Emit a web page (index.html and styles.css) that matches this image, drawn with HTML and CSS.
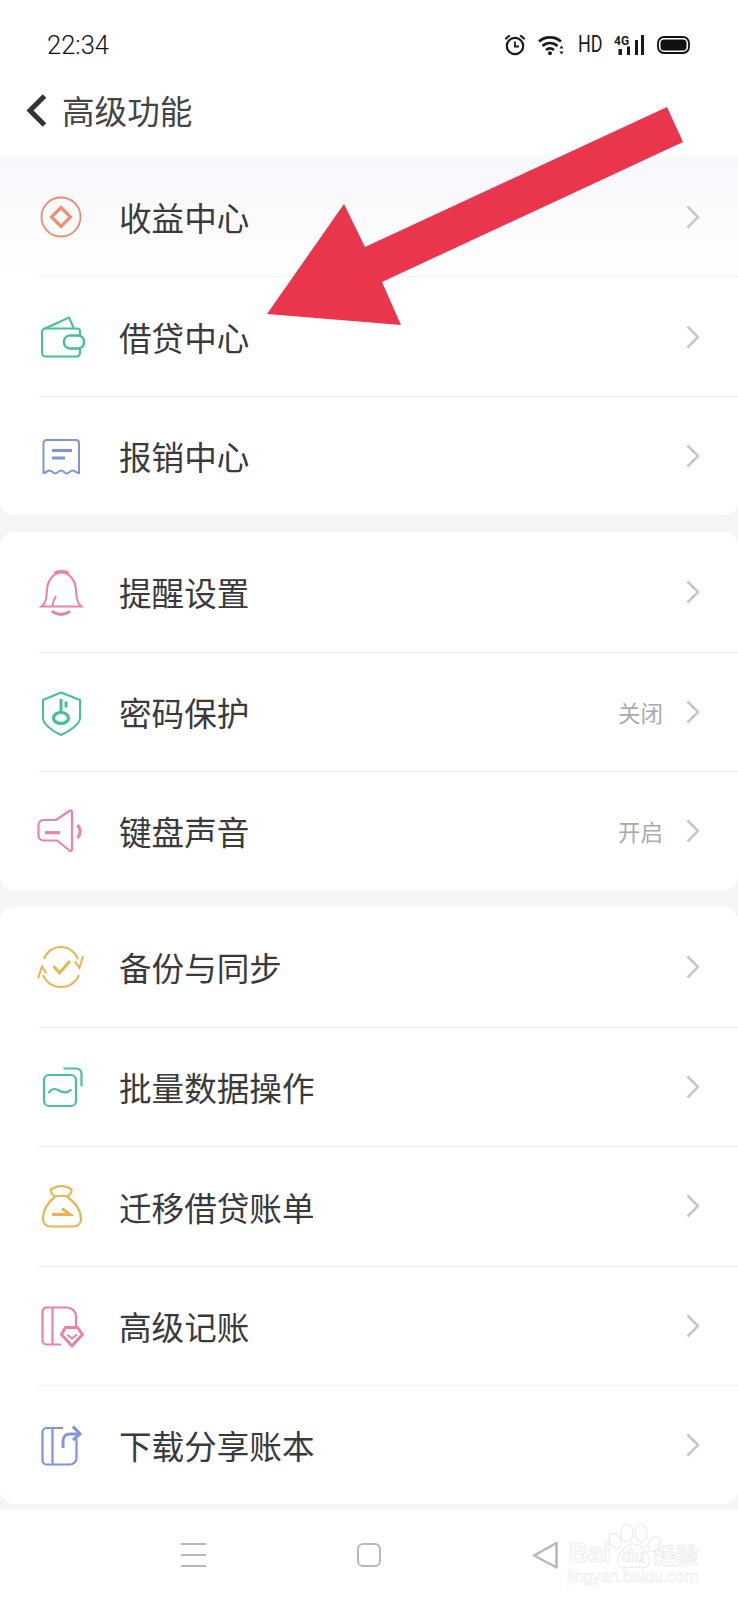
FILE: index.html
```html
<!DOCTYPE html>
<html lang="zh-CN">
<head>
  <meta charset="UTF-8">
  <meta name="viewport" content="width=device-width, initial-scale=1.0">
  <title>高级功能</title>
  <link rel="stylesheet" href="styles.css">
</head>
<body>

<div class="page">
  <div class="status-bar">
    <span class="time">22:34</span>
    <div class="status-icons">
      <svg class="st-alarm" width="22" height="22" viewBox="0 0 22 22" fill="none" stroke="#1a1a1a" stroke-width="2.2">
        <circle cx="11" cy="12" r="8.2"/>
        <path d="M11 7.5V12.5H15" stroke-width="1.8"/>
        <path d="M2 4.5L5 2M20 4.5L17 2" stroke-linecap="round"/>
      </svg>
      <svg class="st-wifi" width="28" height="22" viewBox="0 0 28 22" fill="none" stroke="#1a1a1a" stroke-width="2.6">
        <path d="M1 7.5C7 2 17 2 23 7.5"/>
        <path d="M4.5 12C9 8 15 8 19.5 12"/>
        <path d="M8 16C10.5 14 13.5 14 16 16"/>
        <circle cx="12" cy="19.2" r="2" fill="#1a1a1a" stroke="none"/>
        <path d="M23.5 11.5L21.5 14.5H25.5ZM23.5 20.5L21.5 17.5H25.5Z" fill="#1a1a1a" stroke="none"/>
      </svg>
      <span class="st-hd">HD</span>
      <svg class="st-signal" width="31" height="22" viewBox="0 0 31 22" fill="#1a1a1a">
        <text x="0" y="10.5" class="st-net">4G</text>
        <rect x="4.500" y="15" width="3.500" height="6"/>
        <rect x="13" y="12.500" width="3" height="8.500"/>
        <rect x="21" y="6" width="3" height="15"/>
        <rect x="27" y="1" width="3" height="20"/>
      </svg>
      <svg class="st-battery" width="33" height="20" viewBox="0 0 33 20" fill="#111">
        <rect x="1" y="2" width="31" height="16" rx="6" fill="none" stroke="#111" stroke-width="1.800"/>
        <rect x="3.500" y="4.500" width="26" height="11" rx="3.500"/>
      </svg>
    </div>
  </div>

  <div class="title-bar">
    <svg class="back" width="21" height="33" viewBox="0 0 21 33" fill="none" stroke="#333" stroke-width="5">
      <path d="M18.500 2L4 16.500L18.500 31"/>
    </svg>
    <span class="title">高级功能</span>
  </div>

  <div class="panel panel-top">
    <div class="row">
      <svg class="icon" viewBox="0 0 48 48" fill="none" stroke="#e88c72">
        <circle cx="24" cy="24" r="19.500" stroke-width="1.800"/>
        <path d="M24 14.500L33.500 24L24 33.500L14.500 24Z" stroke-width="3.200" stroke="#ee9170"/>
      </svg>
      <span class="label">收益中心</span>
      <svg class="chevron" viewBox="0 0 14 24"><path d="M1.500 1.500L12 12L1.500 22.500"/></svg>
    </div>
    <div class="row">
      <svg class="icon" viewBox="0 0 48 48" fill="none" stroke="#42c193" stroke-width="2">
        <path d="M43 35.500V40A3.500 3.500 0 0 1 39.500 43.500H8.500A3.500 3.500 0 0 1 5 40V19A3.500 3.500 0 0 1 8.500 15.500H40A3 3 0 0 1 43 18.500V22.500"/>
        <path d="M7 16L32 4.500L37 15.500"/>
        <rect x="27" y="22.500" width="20" height="13" rx="6" stroke-width="2.400"/>
      </svg>
      <span class="label">借贷中心</span>
      <svg class="chevron" viewBox="0 0 14 24"><path d="M1.500 1.500L12 12L1.500 22.500"/></svg>
    </div>
    <div class="row">
      <svg class="icon" viewBox="0 0 48 48" fill="none" stroke="#7f94d9" stroke-width="2">
        <path d="M6.500 41V11A3 3 0 0 1 9.500 8H39A3 3 0 0 1 42 11V41C39 41 38 38.500 35.500 38.500C33 38.500 32 41.500 30 41.500C27.500 41.500 26.500 38.500 24 38.500C21.500 38.500 20.500 41.500 18.500 41.500C16 41.500 15 38.500 12.500 38.500C10 38.500 9.500 41 6.500 41Z"/>
        <path d="M15 18.500H35M15 26H28" stroke-width="3"/>
      </svg>
      <span class="label">报销中心</span>
      <svg class="chevron" viewBox="0 0 14 24"><path d="M1.500 1.500L12 12L1.500 22.500"/></svg>
    </div>
  </div>

  <div class="panel">
    <div class="row">
      <svg class="icon" viewBox="0 0 48 48" fill="none" stroke="#ec80a6" stroke-width="2">
        <path d="M4.500 38.500H44.500C40 35 39.500 30 39 22C38.500 12 32 4.500 24.500 4.500C17 4.500 10.500 12 10 22C9.500 30 9 35 4.500 38.500Z"/>
        <path d="M19 28C17 31 16 34 15.500 38"/>
        <path d="M17.500 5.500C20.500 2.800 28.500 2.800 31.500 5.500" stroke-width="3.200"/>
        <path d="M15 43C20 47.500 28 47.500 33 43" stroke-width="3"/>
      </svg>
      <span class="label">提醒设置</span>
      <svg class="chevron" viewBox="0 0 14 24"><path d="M1.500 1.500L12 12L1.500 22.500"/></svg>
    </div>
    <div class="row">
      <svg class="icon" viewBox="0 0 48 48" fill="none" stroke="#42c193" stroke-width="2">
        <path d="M24 4.500L43 12V30C43 36 33 43 24 47C15 43 6 36 6 30V12Z" stroke-linejoin="round"/>
        <ellipse cx="24" cy="30" rx="7.500" ry="5.500" stroke-width="3.200"/>
        <path d="M24 11V24M29 13.500V19.500" stroke-width="3"/>
      </svg>
      <span class="label">密码保护</span>
      <span class="value">关闭</span>
      <svg class="chevron" viewBox="0 0 14 24"><path d="M1.500 1.500L12 12L1.500 22.500"/></svg>
    </div>
    <div class="row">
      <svg class="icon" viewBox="0 0 48 48" fill="none" stroke="#ea82aa" stroke-width="2.200">
        <path d="M33 3.500C34.500 3 35 4 35 5V42.500C35 43.500 34 44.500 32.500 43.500L20 33.500H6A5 5 0 0 1 1.500 28.500V18A5 5 0 0 1 6 13H19Z" stroke-linejoin="round"/>
        <path d="M8 25.700H23" stroke-width="3.200"/>
        <path d="M40.500 18C44 22 44 27 40.500 31" stroke-width="3.200"/>
      </svg>
      <span class="label">键盘声音</span>
      <span class="value">开启</span>
      <svg class="chevron" viewBox="0 0 14 24"><path d="M1.500 1.500L12 12L1.500 22.500"/></svg>
    </div>
  </div>

  <div class="panel">
    <div class="row">
      <svg class="icon" viewBox="0 0 48 48" fill="none" stroke="#e9b54e" stroke-width="2">
        <path d="M7 16C9.500 9 16 4 24 4C32 4 38.500 9 41 16.500"/>
        <path d="M42 32C39.500 39 32.500 44 24 44C15.500 44 8.500 39 6 32"/>
        <path d="M46 13L42.500 25L38 18.500M1 35.500L5 23.500L9.500 30.500"/>
        <path d="M16.500 23L22.500 30L33 18" stroke-width="3"/>
      </svg>
      <span class="label">备份与同步</span>
      <svg class="chevron" viewBox="0 0 14 24"><path d="M1.500 1.500L12 12L1.500 22.500"/></svg>
    </div>
    <div class="row">
      <svg class="icon" viewBox="0 0 48 48" fill="none" stroke="#48c19d" stroke-width="2.200">
        <rect x="7" y="12" width="32" height="31" rx="5"/>
        <path d="M26.500 5.500H39.500A5 5 0 0 1 44.500 10.500V23"/>
        <path d="M11.500 30C15 25 18 25 22 27.500C26 30 30 30.500 34.500 26.500"/>
      </svg>
      <span class="label">批量数据操作</span>
      <svg class="chevron" viewBox="0 0 14 24"><path d="M1.500 1.500L12 12L1.500 22.500"/></svg>
    </div>
    <div class="row">
      <svg class="icon" viewBox="0 0 48 48" fill="none" stroke="#e9b54e" stroke-width="2.200">
        <path d="M18 14.500C15 12.500 13.500 10 14 7.500C20 3 29 3 34.500 7.500C35 10 33.500 12.500 30.500 14.500C26 13.500 22 13.500 18 14.500Z" stroke-linejoin="round"/>
        <path d="M18 15C11 20 6 28 6 37C6 41.500 9 44.500 14 44.500H36C41 44.500 44 41.500 44 37C44 28 37.500 20 30.500 15"/>
        <path d="M15 32.500H33L25 26.500" stroke-width="3"/>
      </svg>
      <span class="label">迁移借贷账单</span>
      <svg class="chevron" viewBox="0 0 14 24"><path d="M1.500 1.500L12 12L1.500 22.500"/></svg>
    </div>
    <div class="row">
      <svg class="icon" viewBox="0 0 48 48" fill="none" stroke="#ea80ad" stroke-width="2.200">
        <path d="M24 42.500H9.500A4 4 0 0 1 5.500 38.500V9.500A4 4 0 0 1 9.500 5.500H30A9 9 0 0 1 39 14.500V25"/>
        <path d="M15.500 5.500V42.500"/>
        <path d="M28.500 25.500H40.500L45.500 32.500L35 44L24.500 32.500Z" fill="#fff" stroke-width="3" stroke-linejoin="round"/>
        <path d="M30 32.500L35 36.500L40 32.500" stroke-width="1.800"/>
      </svg>
      <span class="label">高级记账</span>
      <svg class="chevron" viewBox="0 0 14 24"><path d="M1.500 1.500L12 12L1.500 22.500"/></svg>
    </div>
    <div class="row">
      <svg class="icon" viewBox="0 0 48 48" fill="none" stroke="#7f94dc" stroke-width="2.200">
        <path d="M26 7H9.500A4 4 0 0 0 5.500 11V39.500A4 4 0 0 0 9.500 43.500H33A6.500 6.500 0 0 0 39.500 37V18"/>
        <path d="M15.500 7V43.500"/>
        <path d="M26 27V20C26 15.500 29 13 33 13H42" stroke-width="3"/>
        <path d="M36 5.500L43 13L36 19" stroke-width="3"/>
      </svg>
      <span class="label">下载分享账本</span>
      <svg class="chevron" viewBox="0 0 14 24"><path d="M1.500 1.500L12 12L1.500 22.500"/></svg>
    </div>
  </div>

  <div class="nav-bar">
    <div class="nav-item">
      <div class="nav-menu"><span></span><span></span><span></span></div>
    </div>
    <div class="nav-item"><div class="nav-home"></div></div>
    <div class="nav-item">
      <svg width="26" height="28" viewBox="0 0 26 28" fill="none" stroke="#b8b8b8" stroke-width="2.500" stroke-linejoin="round">
        <path d="M24.500 2L2 14.500L24.500 26.500Z"/>
      </svg>
    </div>

    <!-- watermark -->
    <div class="watermark">
      <svg class="wm-paw" width="76" height="52" viewBox="0 0 76 52" fill="#fff" stroke="#ebebeb" stroke-width="1.200">
        <ellipse cx="30" cy="13" rx="6" ry="9"/>
        <ellipse cx="44" cy="13" rx="6" ry="9"/>
        <ellipse cx="18" cy="21" rx="5.500" ry="8" transform="rotate(-30 18 21)"/>
        <ellipse cx="57" cy="24" rx="5.500" ry="8" transform="rotate(30 57 24)"/>
        <path d="M36 24C45 24 54 36 52 44C50 50 42 47 37 47C31 47 24 50 21 44C19 36 28 24 36 24Z"/>
      </svg>
      <div class="wm-top">
        <span class="wm-bai">Bai</span>
        <span class="wm-du">du</span>
        <span class="wm-cn">经验</span>
      </div>
      <div class="wm-url">jingyan.baidu.com</div>
    </div>
  </div>

  <!-- red arrow drawn over the screenshot -->
  <svg class="arrow" width="738" height="340" viewBox="0 0 738 340">
    <polygon points="667,107 683,142 382,282 401,325 267,314 344,204 365,247" fill="#e9364c"/>
  </svg>
</div>

</body>
</html>
```

FILE: styles.css
```css
body {
  margin: 0;
  background-color: #fff;
  font-family: "Noto Sans CJK SC", "Noto Sans", sans-serif;
}

.page {
  position: relative;
  width: 738px;
  height: 1600px;
  overflow: hidden;
  background-color: #f5f5f8;
}

/* status bar */
.status-bar {
  height: 90px;
  padding: 0 48px 0 47px;
  background-color: #fff;
  display: flex;
  justify-content: space-between;
  align-items: center;
}

.time {
  font-family: Roboto, sans-serif;
  font-size: 25.5px;
  font-weight: 300;
  color: #111;
}

.status-icons {
  display: flex;
  align-items: center;
  gap: 12px;
}

.st-hd {
  width: 24px;
  font-family: Roboto, sans-serif;
  font-size: 23px;
  line-height: 22px;
  color: #1a1a1a;
  transform: scaleX(0.78);
  transform-origin: left center;
}

.st-net {
  font-family: Roboto, sans-serif;
  font-size: 12px;
  font-weight: 700;
}

/* title */
.title-bar {
  height: 40px;
  padding: 0 0 27px 26px;
  background-color: #fff;
  display: flex;
  align-items: center;
  gap: 15px;
}

.title {
  font-size: 32.6px;
  line-height: 1;
  color: #444;
}

/* list */
.panel {
  margin-bottom: 17px;
  background-color: #fff;
  border-radius: 14px;
}

.panel-top {
  background: linear-gradient(#f7f7fc, #fff 34%);
  border-radius: 0 0 14px 14px;
}

.row {
  box-sizing: border-box;
  height: 119.4px;
  margin-left: 37px;
  padding-right: 38px;
  display: flex;
  align-items: center;
}

.row + .row {
  border-top: 1px solid #f1f1f3;
}

.icon {
  width: 48px;
  height: 48px;
  flex-shrink: 0;
}

.label {
  flex: 1;
  margin-left: 34px;
  padding-top: 1px;
  font-size: 32.6px;
  line-height: 1;
  color: #3a3a3a;
}

.value {
  margin-right: 23px;
  font-size: 22.5px;
  line-height: 1;
  color: #aaa;
}

.chevron {
  width: 14px;
  height: 24px;
  fill: none;
  stroke: #c6c6c6;
  stroke-width: 2.5;
}

/* bottom navigation */
.nav-bar {
  position: absolute;
  left: 0;
  right: 0;
  bottom: 0;
  height: 91px;
  background-color: #fff;
  display: grid;
  grid-template-columns: repeat(3, 176px);
  justify-content: center;
  align-items: center;
}

.nav-item {
  display: flex;
  justify-content: center;
}

.nav-menu {
  width: 25px;
  display: flex;
  flex-direction: column;
  gap: 9px;
}

.nav-menu span {
  height: 2px;
  background-color: #b8b8b8;
}

.nav-home {
  width: 20px;
  height: 20px;
  border: 2.5px solid #b8b8b8;
  border-radius: 6px;
}

/* watermark */
.watermark {
  position: absolute;
  left: 567px;
  top: 11px;
  width: 135px;
  height: 66px;
}

.wm-paw {
  position: absolute;
  left: 30px;
  top: 0;
}

.wm-top {
  position: absolute;
  left: 2px;
  top: 18px;
  width: 131px;
  height: 30px;
  font-family: "Liberation Sans", sans-serif;
  font-weight: 700;
  color: #fff;
  -webkit-text-stroke: 0.7px #e6e6e6;
}

.wm-bai {
  position: absolute;
  left: 0;
  top: 0;
  font-size: 27px;
  line-height: 30px;
}

.wm-du {
  position: absolute;
  left: 53px;
  top: 8px;
  font-size: 19px;
  line-height: 20px;
}

.wm-cn {
  position: absolute;
  left: 85px;
  top: 2px;
  font-family: "Noto Sans CJK SC", sans-serif;
  font-size: 22px;
  line-height: 26px;
}

.wm-url {
  position: absolute;
  left: 0;
  top: 46px;
  font-family: "Liberation Sans", sans-serif;
  font-size: 16.3px;
  line-height: 20px;
  color: #fff;
  -webkit-text-stroke: 0.5px #e8e8e8;
}

.arrow {
  position: absolute;
  left: 0;
  top: 0;
  pointer-events: none;
}
```
